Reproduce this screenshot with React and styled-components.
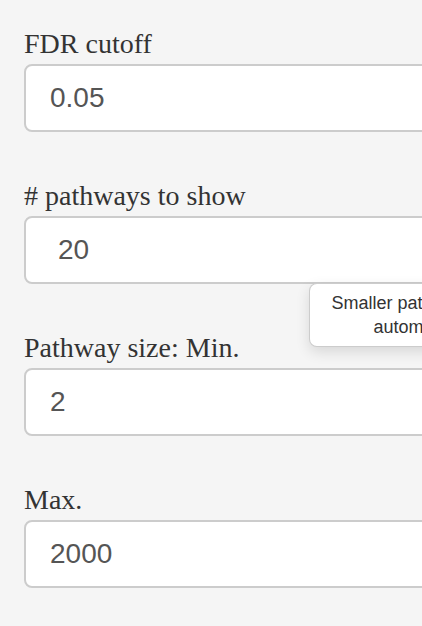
import React from 'react'
import styled, { createGlobalStyle } from 'styled-components'

const GlobalStyle = createGlobalStyle`
  html, body {
    margin: 0;
    padding: 0;
    background: #f5f5f5;
    overflow: hidden;
  }
`

const Panel = styled.div`
  width: 600px;
  padding: 24px 0 0 24px;
  display: flex;
  flex-direction: column;
  gap: 44px;
`

const Group = styled.div`
  position: relative;
  display: flex;
  flex-direction: column;
`

const Label = styled.label`
  font-family: "Liberation Serif", "Times New Roman", serif;
  font-size: 28px;
  line-height: 40px;
  color: #333;
`

const Field = styled.div`
  box-sizing: border-box;
  height: 68px;
  width: 560px;
  background: #fff;
  border: 2px solid #ccc;
  border-radius: 8px;
  padding: 0 0 0 ${p => 24 + (p.$indent || 0)}px;
  display: flex;
  align-items: center;
  font-family: "Liberation Sans", Arial, sans-serif;
  font-size: 28px;
  color: #555;
`

const Tip = styled.div`
  position: absolute;
  top: calc(100% - 1px);
  left: 285px;
  box-sizing: border-box;
  width: 400px;
  padding: 7px 16px;
  background: #fff;
  border: 1px solid rgba(0, 0, 0, 0.2);
  border-radius: 8px;
  box-shadow: 0 5px 14px rgba(0, 0, 0, 0.12);
  font-family: "Liberation Sans", Arial, sans-serif;
  font-size: 18px;
  line-height: 24px;
  color: #333;
  text-align: center;
  z-index: 2;
`

const TipLine = styled.div`
  white-space: nowrap;
`

const fields = [
  { label: 'FDR cutoff', value: '0.05' },
  { label: '# pathways to show', value: '20', indent: 8, tip: true },
  { label: 'Pathway size: Min.', value: '2' },
  { label: 'Max.', value: '2000' },
]

export default function App() {
  return (
    <>
      <GlobalStyle />
      <Panel>
        {fields.map(f => (
          <Group key={f.label}>
            <Label>{f.label}</Label>
            <Field $indent={f.indent}>{f.value}</Field>
            {f.tip && (
              <Tip>
                <TipLine>Smaller pathways with fewer genes could be</TipLine>
                <TipLine>automatically excluded from tests.</TipLine>
              </Tip>
            )}
          </Group>
        ))}
      </Panel>
    </>
  )
}
